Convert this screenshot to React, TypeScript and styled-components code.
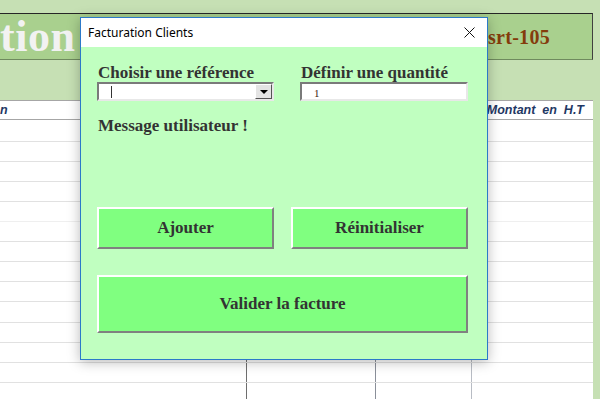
import styled, { createGlobalStyle } from 'styled-components';

const GlobalStyle = createGlobalStyle`
  html, body {
    margin: 0;
    padding: 0;
  }
  body {
    font-family: "Liberation Sans", Arial, sans-serif;
  }
`;

const Page = styled.div`
  position: relative;
  width: 600px;
  height: 399px;
  overflow: hidden;
  background: #c6e0b4;
  padding-right: 7px;
  box-sizing: border-box;
  display: flex;
  flex-direction: column;
`;

const TopGap = styled.div`
  height: 13px;
  flex: none;
`;

const Banner = styled.div`
  height: 45px;
  flex: none;
  background: #a9d08e;
  border-top: 1px solid #262626;
  border-right: 1px solid #404040;
  border-bottom: 1px solid #6f8a5e;
  display: flex;
  align-items: center;
  justify-content: space-between;
  padding-right: 42px;
  font-family: "Liberation Serif", "Times New Roman", serif;
  font-weight: bold;
`;

const BannerTitle = styled.span`
  font-size: 44px;
  color: #f2f2f2;
  line-height: 44px;
  letter-spacing: 0.5px;
`;

const BannerRef = styled.span`
  font-size: 20px;
  color: #843c0c;
  padding-top: 2px;
  letter-spacing: 0.3px;
`;

const Spacer = styled.div`
  height: 40px;
  flex: none;
`;

const Sheet = styled.div`
  flex: 1;
  background: #fff;
  border-top: 1px solid #a6a6a6;
`;

const columns = [246, 129, 96, 122];
const colLines = ['transparent', '#6e6e6e', '#8a8f99', '#b8bcc4'];

const HeaderRow = styled.div`
  display: flex;
  height: 18px;
  border-bottom: 1px solid #a6a6a6;
`;

const HeaderCell = styled.div<{ $w: number; $align: string }>`
  width: ${(p) => p.$w}px;
  flex: none;
  box-sizing: border-box;
  padding-right: ${(p) => (p.$align === 'right' ? 9 : 0)}px;
  font-family: "Liberation Sans", Arial, sans-serif;
  font-size: 12.5px;
  font-weight: bold;
  font-style: italic;
  color: #1f3864;
  line-height: 18px;
  text-align: ${(p) => p.$align};
  white-space: pre;
`;

const Row = styled.div<{ $h: number; $line: string }>`
  display: flex;
  height: ${(p) => p.$h}px;
  border-bottom: 1px solid ${(p) => p.$line};
  box-sizing: border-box;
`;

const Cell = styled.div<{ $w: number; $line: string }>`
  width: ${(p) => p.$w}px;
  flex: none;
  box-sizing: border-box;
  border-left: 1px solid ${(p) => p.$line};
`;

const Dialog = styled.div`
  position: absolute;
  left: 80px;
  top: 17px;
  width: 408px;
  height: 343px;
  box-sizing: border-box;
  border: 1px solid #2b79c9;
  box-shadow: 0 2px 12px rgba(0, 0, 0, 0.28);
  display: flex;
  flex-direction: column;
  background: #c0ffc0;
`;

const TitleBar = styled.div`
  height: 29px;
  flex: none;
  background: #fff;
  display: flex;
  align-items: center;
  justify-content: space-between;
  padding: 0 12px 0 7px;
  font-family: "Noto Sans", "Open Sans", sans-serif;
  font-size: 12px;
  color: #000;
`;

const CloseIcon = () => (
  <svg width="11" height="11" viewBox="0 0 11 11">
    <path d="M0.5 0.5 L10.5 10.5 M10.5 0.5 L0.5 10.5" stroke="#111" strokeWidth="1" />
  </svg>
);

const Body = styled.div`
  flex: 1;
  display: flex;
  flex-direction: column;
  padding: 17px 19px 0 16px;
  font-family: "Liberation Serif", "Times New Roman", serif;
  font-weight: bold;
  font-size: 17px;
  color: #333;
`;

const FieldRow = styled.div`
  display: flex;
  gap: 26px;
`;

const Field = styled.div<{ $w: number }>`
  width: ${(p) => p.$w}px;
  display: flex;
  flex-direction: column;
`;

const Label = styled.div`
  height: 18px;
  line-height: 18px;
  padding-left: 1px;
  white-space: nowrap;
`;

const Sunken = styled.div`
  height: 19px;
  box-sizing: border-box;
  background: #fff;
  border-style: solid;
  border-width: 2px;
  border-color: #7a7a7a #e8e8e8 #e8e8e8 #7a7a7a;
  display: flex;
  align-items: center;
`;

const Caret = styled.span`
  width: 1px;
  height: 12px;
  background: #333;
  margin-left: 12px;
`;

const DropButton = styled.div`
  margin-left: auto;
  width: 17px;
  height: 15px;
  box-sizing: border-box;
  background: #e4e4e4;
  border-style: solid;
  border-width: 1px;
  border-color: #fff #555 #555 #fff;
  display: flex;
  align-items: center;
  justify-content: center;
`;

const Arrow = styled.span`
  width: 0;
  height: 0;
  border-left: 4px solid transparent;
  border-right: 4px solid transparent;
  border-top: 4px solid #000;
`;

const QtyValue = styled.span`
  margin-left: 12px;
  font-weight: normal;
  font-size: 11px;
  color: #3e1c10;
  line-height: 1;
  padding-top: 3px;
`;

const Message = styled.div`
  margin-top: 16px;
  height: 18px;
  line-height: 18px;
  padding-left: 1px;
`;

const ButtonRow = styled.div`
  display: flex;
  gap: 17px;
  margin-top: 72px;
`;

const ActionButton = styled.button<{ $w: number; $h: number }>`
  width: ${(p) => p.$w}px;
  height: ${(p) => p.$h}px;
  box-sizing: border-box;
  background: #80ff80;
  border-style: solid;
  border-width: 2px;
  border-color: #fff #808080 #808080 #fff;
  font-family: "Liberation Serif", "Times New Roman", serif;
  font-weight: bold;
  font-size: 17px;
  color: #333;
  padding: 0;
  cursor: pointer;
`;

const WideRow = styled.div`
  margin-top: 26px;
  display: flex;
`;

const rowHeights = [22, 20, 20, 20, 20, 20, 20, 20, 20, 21, 20, 20, 20, 20];

export default function App() {
  return (
    <>
      <GlobalStyle />
      <Page>
        <TopGap />
        <Banner>
          <BannerTitle>tion</BannerTitle>
          <BannerRef>srt-105</BannerRef>
        </Banner>
        <Spacer />
        <Sheet>
          <HeaderRow>
            <HeaderCell $w={columns[0]} $align="left">n</HeaderCell>
            <HeaderCell $w={columns[1]} $align="center">Quantité</HeaderCell>
            <HeaderCell $w={columns[2]} $align="center">Prix</HeaderCell>
            <HeaderCell $w={columns[3]} $align="right">{'Montant  en  H.T'}</HeaderCell>
          </HeaderRow>
          {rowHeights.map((h, i) => (
            <Row key={i} $h={h} $line={i === 4 ? '#efefef' : '#e1e1e1'}>
              {columns.map((w, j) => (
                <Cell key={j} $w={w} $line={colLines[j]} />
              ))}
            </Row>
          ))}
        </Sheet>

        <Dialog>
          <TitleBar>
            <span>Facturation Clients</span>
            <CloseIcon />
          </TitleBar>
          <Body>
            <FieldRow>
              <Field $w={177}>
                <Label>Choisir une référence</Label>
                <Sunken>
                  <Caret />
                  <DropButton>
                    <Arrow />
                  </DropButton>
                </Sunken>
              </Field>
              <Field $w={168}>
                <Label>Définir une quantité</Label>
                <Sunken>
                  <QtyValue>1</QtyValue>
                </Sunken>
              </Field>
            </FieldRow>
            <Message>Message utilisateur !</Message>
            <ButtonRow>
              <ActionButton $w={177} $h={42}>Ajouter</ActionButton>
              <ActionButton $w={177} $h={42}>Réinitialiser</ActionButton>
            </ButtonRow>
            <WideRow>
              <ActionButton $w={371} $h={58}>Valider la facture</ActionButton>
            </WideRow>
          </Body>
        </Dialog>
      </Page>
    </>
  );
}
